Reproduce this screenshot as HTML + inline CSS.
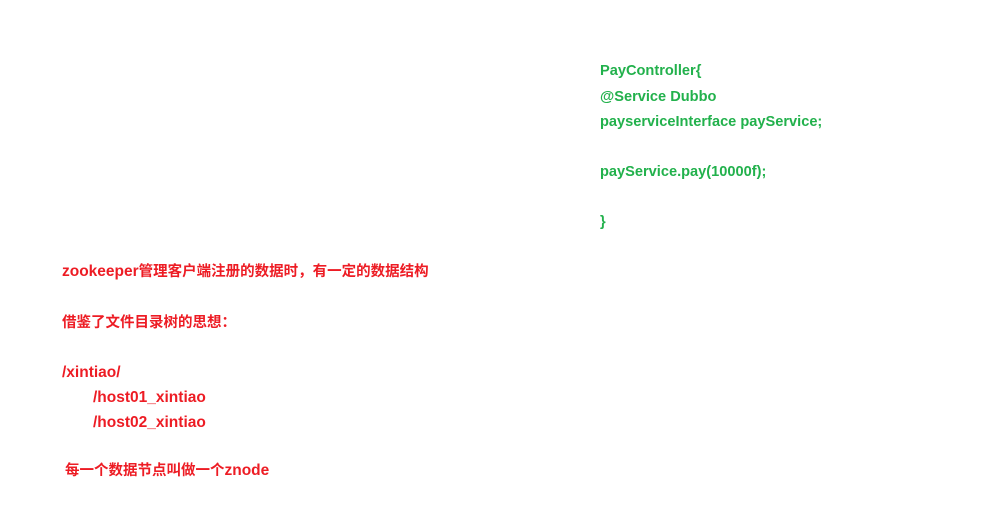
<!DOCTYPE html>
<html><head><meta charset="utf-8"><style>
html,body{margin:0;padding:0;background:#fff;width:984px;height:511px;overflow:hidden}
.t{position:absolute;white-space:nowrap;font-family:"Liberation Sans","Noto Sans CJK SC",sans-serif;font-weight:bold;line-height:18px}
.g{color:#22b14c;left:600px;font-size:14.6px}
.r{color:#ed1c24;font-size:15.5px}
.c{font-size:14.5px;font-family:"Noto Sans CJK SC",sans-serif}
</style></head><body>
<div class="t g" style="top:62px">PayController{</div>
<div class="t g" style="top:88px">@Service Dubbo</div>
<div class="t g" style="top:113px">payserviceInterface payService;</div>
<div class="t g" style="top:163px">payService.pay(10000f);</div>
<div class="t g" style="top:213px">}</div>
<div class="t r" style="top:262px;left:62px">zookeeper<span class="c">管理客户端注册的数据时，有一定的数据结构</span></div>
<div class="t r" style="top:313px;left:62px"><span class="c">借鉴了文件目录树的思想：</span></div>
<div class="t r" style="top:364px;left:62px">/xintiao/</div>
<div class="t r" style="top:389px;left:93px">/host01_xintiao</div>
<div class="t r" style="top:414px;left:93px">/host02_xintiao</div>
<div class="t r" style="top:461px;left:65px"><span class="c">每一个数据节点叫做一个</span>znode</div>
</body></html>
